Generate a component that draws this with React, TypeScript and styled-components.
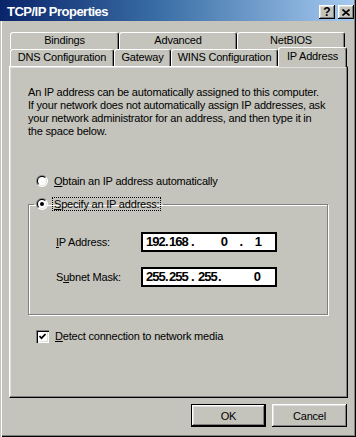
import React from 'react';
import styled, { createGlobalStyle, css } from 'styled-components';

const BG = '#c4c4bc';
const FONT = '"Liberation Sans", Arial, sans-serif';

const Global = createGlobalStyle`
  html, body { margin: 0; padding: 0; background: ${BG}; }
  body { font-family: ${FONT}; font-size: 11px; color: #000; }
  * { box-sizing: border-box; }
`;

const Window = styled.div`
  width: 356px;
  height: 437px;
  background: ${BG};
  box-shadow: inset -1px -1px #000, inset -2px -2px #808080;
  display: flex;
  flex-direction: column;
  overflow: hidden;
`;

const TitleBar = styled.div`
  height: 21px;
  margin-right: 2px;
  padding: 3px 0 0 7px;
  background: linear-gradient(90deg, #0a246a 0%, #3a6ea5 45%, #a6caf0 100%);
  display: flex;
  align-items: center;
  justify-content: space-between;
`;

const Title = styled.span`
  color: #fff;
  font-weight: bold;
  font-size: 13px;
  letter-spacing: -0.5px;
  line-height: 16px;
`;

const TitleButtons = styled.div`
  display: flex;
  gap: 3px;
`;

const raised = css`
  background: ${BG};
  box-shadow: inset -1px -1px #000, inset 1px 1px #fff, inset -2px -2px #808080,
    inset 2px 2px #dfdfdf;
`;

const TitleBtn = styled.button`
  width: 16px;
  height: 14px;
  padding: 0;
  border: 0;
  ${raised};
  display: flex;
  align-items: center;
  justify-content: center;
  font: bold 12px ${FONT};
  line-height: 12px;
  color: #000;
`;

const Body = styled.div`
  flex: 1;
  padding: 11px 0 0 2px;
  box-shadow: inset 1px 0 ${BG}, inset 2px 0 #fff, inset -1px -1px #000, inset -2px -2px #808080;
  display: flex;
  flex-direction: column;
`;

const Tabs = styled.div`
  display: flex;
  flex-direction: column;
  margin-left: 8px;
`;

const TabRow = styled.div`
  display: flex;
  height: 17px;
  align-items: flex-end;
`;

const Tab = styled.div<{ $w: number; $selected?: boolean }>`
  width: ${(p) => p.$w}px;
  height: 17px;
  flex: none;
  background: ${BG};
  border-top: 1px solid #fff;
  border-left: 1px solid #fff;
  border-right: 1px solid #000;
  border-top-left-radius: 3px;
  border-top-right-radius: 3px;
  box-shadow: inset -1px 0 #808080;
  display: flex;
  align-items: center;
  justify-content: center;
  letter-spacing: -0.2px;
  line-height: 13px;
  padding-bottom: 1px;
  ${(p) =>
    p.$selected &&
    css`
      height: 20px;
      margin-bottom: -1px;
      padding-bottom: 3px;
      position: relative;
      z-index: 1;
    `}
`;

const Panel = styled.div`
  margin-left: 7px;
  width: 339px;
  height: 332px;
  border-top: 1px solid #fff;
  border-left: 1px solid #fff;
  border-right: 1px solid #000;
  border-bottom: 1px solid #000;
  box-shadow: inset -1px -1px #808080, inset 1px 1px #dfdfdf;
  padding: 19px 0 0 18px;
  display: flex;
  flex-direction: column;
  align-items: flex-start;
`;

const Description = styled.p`
  margin: 0;
  line-height: 13px;
  letter-spacing: -0.2px;
  white-space: nowrap;
`;

const OptionRow = styled.label<{ $top: number }>`
  display: flex;
  align-items: center;
  height: 16px;
  margin: ${(p) => p.$top}px 0 0 8px;
  gap: 6px;
  letter-spacing: -0.2px;
  line-height: 13px;
`;

const Group = styled.fieldset`
  margin: 7px 0 0 0;
  width: 300px;
  padding: 20px 0 27px 0;
  border: 1px solid #808080;
  box-shadow: inset 1px 1px #fff, 1px 1px #fff;
`;

const Legend = styled.legend`
  display: flex;
  align-items: center;
  gap: 4px;
  height: 16px;
  padding: 0 2px;
  margin-left: 5px;
  letter-spacing: -0.2px;
  line-height: 13px;
`;

const FocusLabel = styled.span`
  border: 1px dotted #000;
  padding: 0 1px;
  line-height: 12px;
`;

const FieldRow = styled.div<{ $top?: number }>`
  display: flex;
  align-items: center;
  height: 20px;
  padding-left: 27px;
  margin-top: ${(p) => p.$top ?? 0}px;
`;

const FieldLabel = styled.span`
  width: 85px;
  letter-spacing: -0.2px;
  line-height: 13px;
`;

const IPBox = styled.div`
  width: 136px;
  height: 20px;
  background: #fff;
  border: 2px solid #000;
  padding-left: 3px;
  display: flex;
  align-items: center;
  font-family: ${FONT};
  font-weight: bold;
  font-size: 13px;
  letter-spacing: -1px;
  line-height: 14px;
`;

const Seg = styled.span<{ $w: number; $align?: 'left' | 'right' }>`
  display: inline-block;
  flex: none;
  width: ${(p) => p.$w}px;
  text-align: ${(p) => p.$align ?? 'left'};
`;

const CheckBox = styled.span`
  width: 13px;
  height: 13px;
  flex: none;
  background: #fff;
  box-shadow: inset 1px 1px #808080, inset 2px 2px #000, inset -1px -1px #fff,
    inset -2px -2px #dfdfdf;
  display: flex;
  align-items: center;
  justify-content: center;
`;

const Footer = styled.div`
  margin-left: 7px;
  width: 339px;
  padding: 6px 1px 0 0;
  display: flex;
  justify-content: flex-end;
  gap: 6px;
`;

const Button = styled.button<{ $default?: boolean }>`
  width: 75px;
  height: 23px;
  padding: 0;
  border: 0;
  font: 11px ${FONT};
  letter-spacing: -0.2px;
  color: #000;
  ${raised};
  ${(p) =>
    p.$default &&
    css`
      box-shadow: inset 0 0 0 1px #000, inset -2px -2px #000, inset 2px 2px #fff,
        inset -3px -3px #808080, inset 3px 3px #dfdfdf;
    `}
`;

const Radio: React.FC<{ checked?: boolean }> = ({ checked }) => (
  <svg width="12" height="12" viewBox="0 0 12 12" style={{ flex: 'none' }}>
    <path d="M10.243 1.757 A6 6 0 0 0 1.757 10.243 Z" fill="#808080" />
    <path d="M1.757 10.243 A6 6 0 0 0 10.243 1.757 Z" fill="#fff" />
    <path d="M9.536 2.464 A5 5 0 0 0 2.464 9.536 Z" fill="#000" />
    <path d="M2.464 9.536 A5 5 0 0 0 9.536 2.464 Z" fill="#dfdfdf" />
    <circle cx="6" cy="6" r="4" fill="#fff" />
    {checked && <circle cx="6" cy="6" r="2" fill="#000" />}
  </svg>
);

type SegDef = [string, number, 'left' | 'right'];

const ipSegs: SegDef[] = [
  ['192', 19, 'left'],
  ['.', 4, 'left'],
  ['168', 22, 'left'],
  ['.', 4, 'left'],
  ['0', 32, 'right'],
  ['.', 15, 'right'],
  ['1', 19, 'right'],
];

const maskSegs: SegDef[] = [
  ['255', 19, 'left'],
  ['.', 4, 'left'],
  ['255', 22, 'left'],
  ['.', 7, 'left'],
  ['255', 20, 'left'],
  ['.', 4, 'left'],
  ['0', 38, 'right'],
];

const IPField: React.FC<{ segs: SegDef[] }> = ({ segs }) => (
  <IPBox>
    {segs.map(([t, w, a], i) => (
      <Seg key={i} $w={w} $align={a}>
        {t}
      </Seg>
    ))}
  </IPBox>
);

export default function App() {
  return (
    <>
      <Global />
      <Window>
        <TitleBar>
          <Title>TCP/IP Properties</Title>
          <TitleButtons>
            <TitleBtn>?</TitleBtn>
            <TitleBtn>
              <svg width="8" height="7" viewBox="0 0 8 7">
                <path d="M0.5 0.5 L7.5 6.5 M7.5 0.5 L0.5 6.5" stroke="#000" strokeWidth="1.6" />
              </svg>
            </TitleBtn>
          </TitleButtons>
        </TitleBar>
        <Body>
          <Tabs>
            <TabRow>
              <Tab $w={109}>Bindings</Tab>
              <Tab $w={118}>Advanced</Tab>
              <Tab $w={108}>NetBIOS</Tab>
            </TabRow>
            <TabRow>
              <Tab $w={104}>DNS Configuration</Tab>
              <Tab $w={57}>Gateway</Tab>
              <Tab $w={107}>WINS Configuration</Tab>
              <Tab $w={69} $selected>
                IP Address
              </Tab>
            </TabRow>
          </Tabs>
          <Panel>
            <Description>
              An IP address can be automatically assigned to this computer.
              <br />
              If your network does not automatically assign IP addresses, ask
              <br />
              your network administrator for an address, and then type it in
              <br />
              the space below.
            </Description>
            <OptionRow $top={35}>
              <Radio />
              <span>
                <u>O</u>btain an IP address automatically
              </span>
            </OptionRow>
            <Group>
              <Legend>
                <Radio checked />
                <FocusLabel>
                  <u>S</u>pecify an IP address:
                </FocusLabel>
              </Legend>
              <FieldRow>
                <FieldLabel>
                  <u>I</u>P Address:
                </FieldLabel>
                <IPField segs={ipSegs} />
              </FieldRow>
              <FieldRow $top={15}>
                <FieldLabel>
                  S<u>u</u>bnet Mask:
                </FieldLabel>
                <IPField segs={maskSegs} />
              </FieldRow>
            </Group>
            <OptionRow $top={13}>
              <CheckBox>
                <svg width="7" height="7" viewBox="0 0 7 7">
                  <path d="M0.5 3 L2.5 5.2 L6.5 1" stroke="#000" strokeWidth="1.7" fill="none" />
                </svg>
              </CheckBox>
              <span>
                <u>D</u>etect connection to network media
              </span>
            </OptionRow>
          </Panel>
          <Footer>
            <Button $default>OK</Button>
            <Button>Cancel</Button>
          </Footer>
        </Body>
      </Window>
    </>
  );
}
